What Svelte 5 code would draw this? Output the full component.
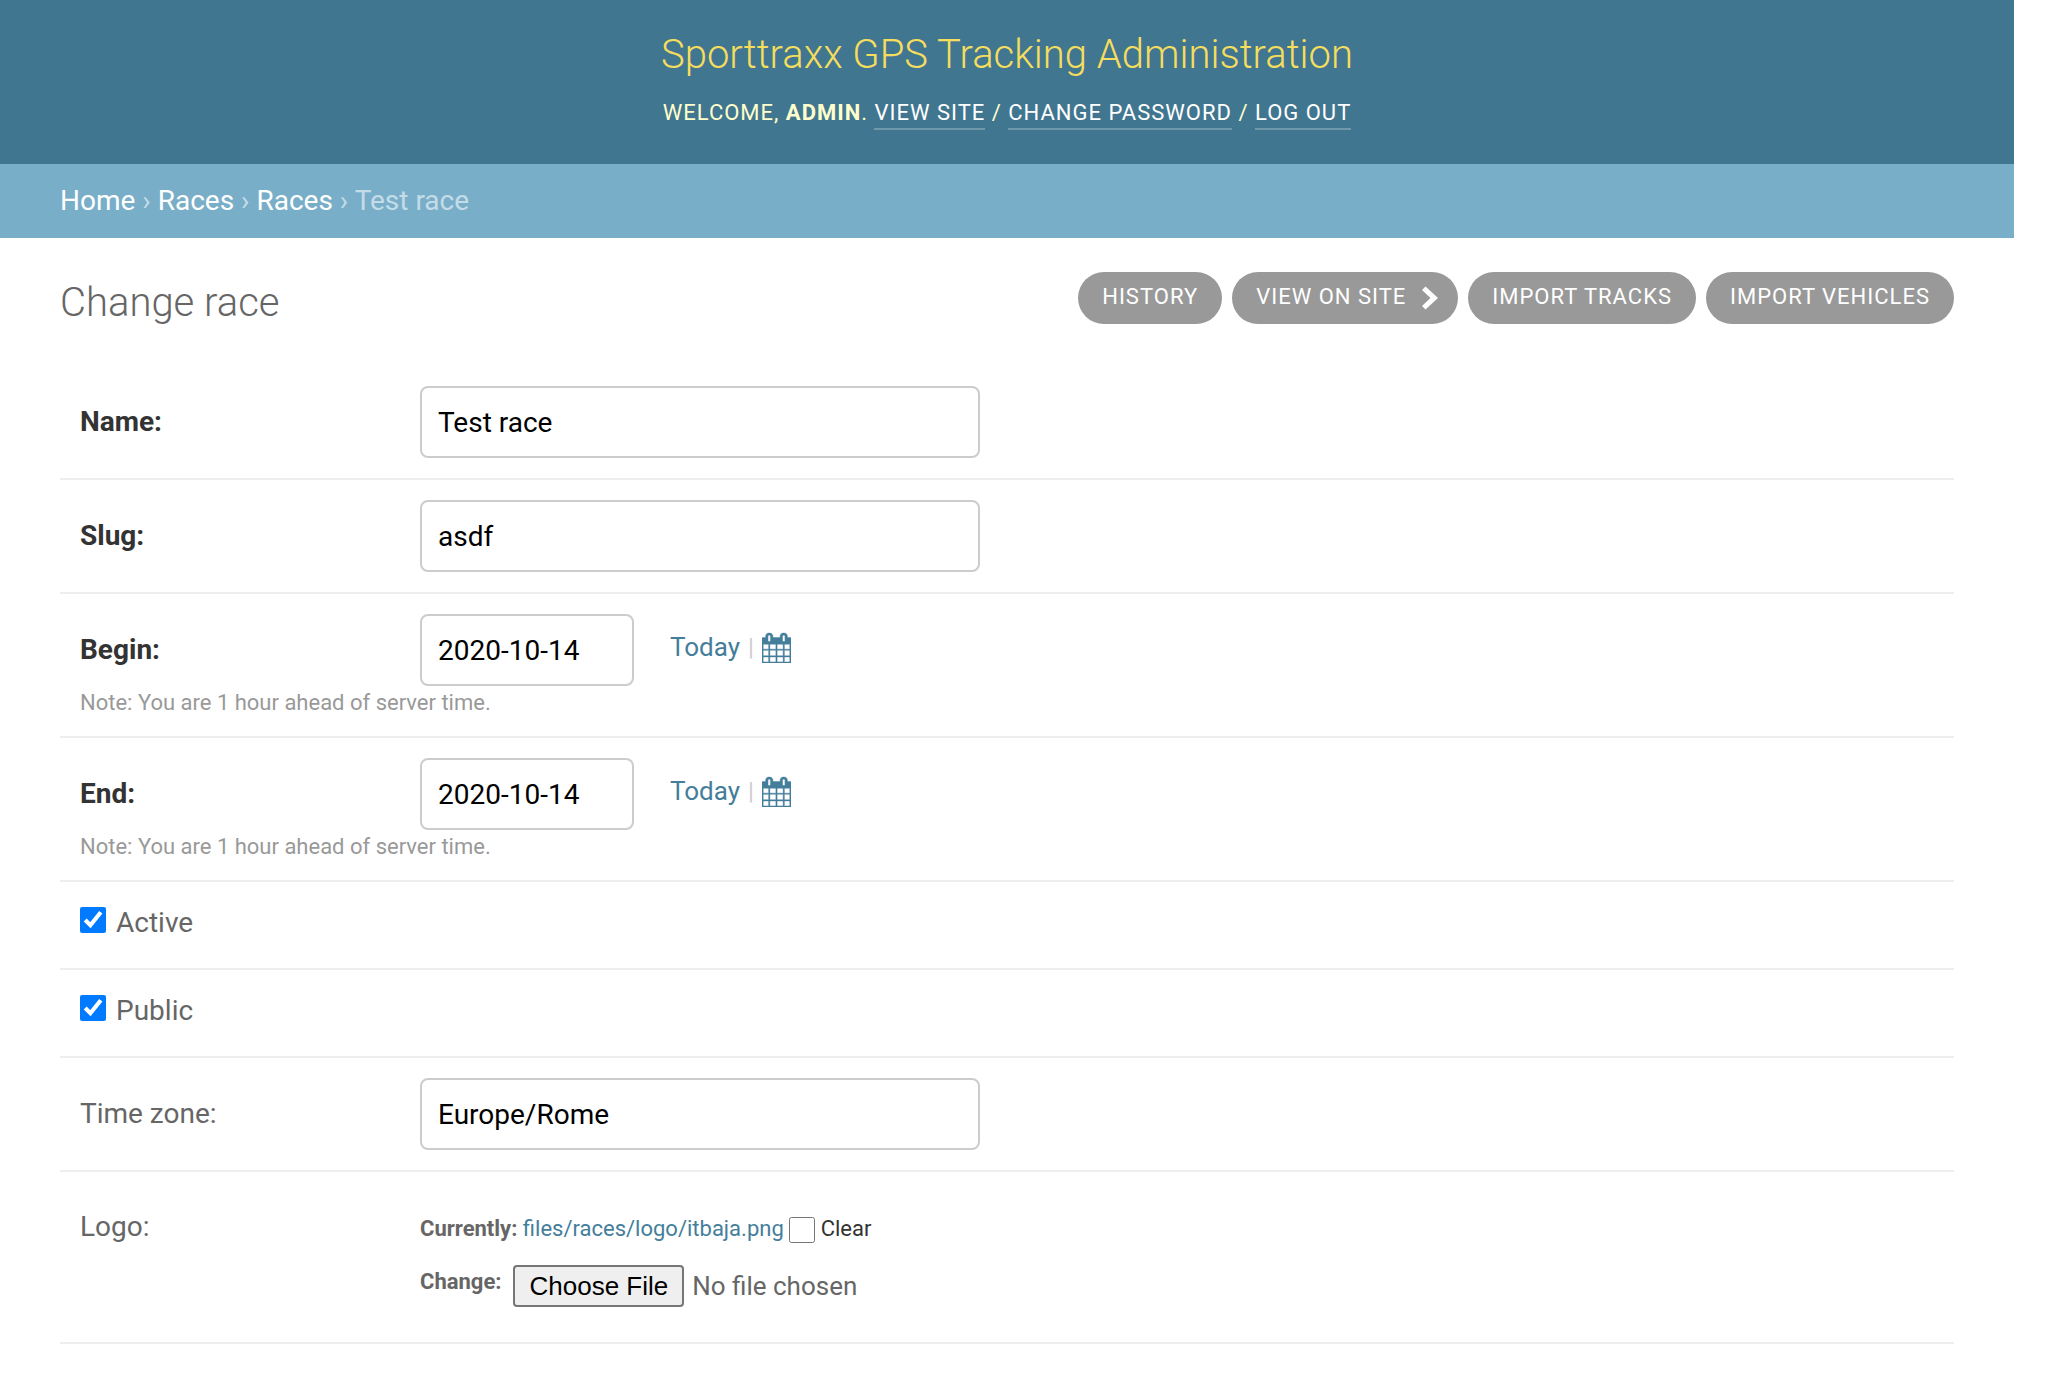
<script>
	const title = "Sporttraxx GPS Tracking Administration";
	const objectTools = ["History", "View on site", "Import tracks", "Import vehicles"];
</script>

{#snippet calendar()}
	<svg class="cal" viewBox="128 -64 1536 1792" width="29" height="31" preserveAspectRatio="none" aria-hidden="true">
		<path fill="#447e9b" stroke="#447e9b" stroke-width="24" d="M192 1664h288v-288h-288v288zm352 0h320v-288h-320v288zm-352-352h288v-320h-288v320zm352 0h320v-320h-320v320zm-352-384h288v-288h-288v288zm736 736h320v-288h-320v288zm-384-736h320v-288h-320v288zm768 736h288v-288h-288v288zm-384-352h320v-320h-320v320zm-352-864v-288q0-13-9.500-22.500t-22.500-9.500h-64q-13 0-22.500 9.500t-9.500 22.500v288q0 13 9.500 22.500t22.500 9.500h64q13 0 22.500-9.500t9.500-22.500zm736 864h288v-320h-288v320zm-384-384h320v-288h-320v288zm384 0h288v-288h-288v288zm32-480v-288q0-13-9.500-22.500t-22.500-9.500h-64q-13 0-22.500 9.500t-9.500 22.500v288q0 13 9.500 22.500t22.500 9.500h64q13 0 22.500-9.500t9.500-22.500zm384-64v1280q0 52-38 90t-90 38h-1408q-52 0-90-38t-38-90v-1280q0-52 38-90t90-38h128v-96q0-66 47-113t113-47h64q66 0 113 47t47 113v96h384v-96q0-66 47-113t113-47h64q66 0 113 47t47 113v96h128q52 0 90 38t38 90z" />
	</svg>
{/snippet}

{#snippet dateRow(label)}
	<div class="row">
		<div class="field">
			<label class="required" for={label}>{label}:</label>
			<input id={label} class="date" type="text" value="2020-10-14" />
			<span class="shortcuts"><a href="#today">Today</a><span class="sep">|</span>{@render calendar()}</span>
		</div>
		<p class="note">Note: You are 1 hour ahead of server time.</p>
	</div>
{/snippet}

<header>
	<h1>{title}</h1>
	<div class="user-tools">
		Welcome, <strong>admin</strong>.
		<a href="#site">View site</a> /
		<a href="#password">Change password</a> /
		<a href="#logout">Log out</a>
	</div>
</header>

<nav class="crumbs">
	<a href="#home">Home</a> › <a href="#races">Races</a> › <a href="#list">Races</a> › Test race
</nav>

<main>
	<div class="head">
		<h2>Change race</h2>
		<ul class="tools">
			{#each objectTools as tool, i}
				<li class:link={i === 1}>
					{tool}
					{#if i === 1}
						<svg viewBox="0 0 16 24" width="16" height="24" aria-hidden="true">
							<path fill="#fff" d="M3.500 0.500 16 12 3.500 23.500 0 20 8.500 12 0 4z" />
						</svg>
					{/if}
				</li>
			{/each}
		</ul>
	</div>

	<div class="row">
		<div class="field">
			<label class="required" for="name">Name:</label>
			<input id="name" class="wide" type="text" value="Test race" />
		</div>
	</div>
	<div class="row">
		<div class="field">
			<label class="required" for="slug">Slug:</label>
			<input id="slug" class="wide" type="text" value="asdf" />
		</div>
	</div>

	{@render dateRow("Begin")}
	{@render dateRow("End")}

	<div class="row check">
		<input id="active" type="checkbox" checked />
		<label for="active">Active</label>
	</div>
	<div class="row check">
		<input id="public" type="checkbox" checked />
		<label for="public">Public</label>
	</div>

	<div class="row">
		<div class="field">
			<label for="tz">Time zone:</label>
			<input id="tz" class="wide" type="text" value="Europe/Rome" />
		</div>
	</div>

	<div class="row logo">
		<div class="field top">
			<label for="logo">Logo:</label>
			<div class="upload">
				<p class="current">
					<b>Currently:</b> <a href="#logo">files/races/logo/itbaja.png</a>
					<input id="clear" type="checkbox" />
					<label for="clear">Clear</label>
				</p>
				<p class="change">
					<b>Change:</b>
					<input id="logo" type="file" />
				</p>
			</div>
		</div>
	</div>
</main>

<style>
	:global(body) {
		font-family: Roboto, "Liberation Sans", sans-serif;
		color: #333;
		background: #fff;
		padding-right: 34px;
	}

	header {
		background: #417690;
		height: 164px;
		box-sizing: border-box;
		padding-top: 31px;
		text-align: center;
		color: #ffc;
	}

	h1 {
		margin: 0;
		font-size: 40px;
		line-height: 48px;
		font-weight: 300;
		color: #f5dd5d;
	}

	.user-tools {
		margin-top: 18px;
		font-size: 22px;
		line-height: 32px;
		letter-spacing: 1px;
		text-transform: uppercase;
	}

	.user-tools strong {
		font-weight: 700;
	}

	.user-tools a {
		padding-bottom: 3px;
		color: #fff;
		text-decoration: none;
		border-bottom: 2px solid rgba(255, 255, 255, 0.25);
	}

	.crumbs {
		background: #79aec8;
		height: 74px;
		box-sizing: border-box;
		padding: 0 60px;
		font-size: 28px;
		line-height: 74px;
		color: #c4dce8;
	}

	.crumbs a {
		color: #fff;
		text-decoration: none;
	}

	main {
		padding: 34px 60px 0;
	}

	.head {
		display: flex;
		justify-content: space-between;
		height: 94px;
		align-items: flex-start;
	}

	h2 {
		margin: 0;
		padding-top: 7px;
		font-size: 40px;
		line-height: 48px;
		font-weight: 300;
		color: #666;
	}

	.tools {
		display: flex;
		gap: 10px;
		margin: 0;
		padding: 0;
		list-style: none;
	}

	.tools li {
		height: 52px;
		box-sizing: border-box;
		padding: 0 24px 2px;
		border-radius: 26px;
		background: #999;
		color: #fff;
		font-size: 22px;
		line-height: 50px;
		letter-spacing: 1px;
		text-transform: uppercase;
		display: flex;
		align-items: center;
		gap: 16px;
	}

	.tools li.link {
		padding-right: 20px;
	}

	.tools li svg {
		margin-top: 2px;
	}

	.row {
		padding: 20px;
		border-bottom: 2px solid #eee;
		font-size: 28px;
	}

	.field {
		display: flex;
		align-items: center;
	}

	.field.top {
		align-items: flex-start;
	}

	.field > label {
		width: 340px;
		flex: none;
		margin-bottom: 2px;
		font-size: 28px;
		color: #666;
	}

	.field > label.required {
		font-weight: 700;
		color: #333;
	}

	.field.top > label {
		margin-top: 18px;
	}

	input[type="text"] {
		height: 72px;
		box-sizing: border-box;
		padding: 0 16px;
		border: 2px solid #ccc;
		border-radius: 8px;
		font: 28px Roboto, sans-serif;
		color: #000;
	}

	.wide {
		width: 560px;
	}

	.date {
		width: 214px;
	}

	.shortcuts {
		display: flex;
		align-items: center;
		margin: 0 0 6px 36px;
		color: #447e9b;
		font-size: 26px;
	}

	.shortcuts a {
		color: #447e9b;
		text-decoration: none;
	}

	.sep {
		margin: 0 8px;
		color: #ccc;
		font-size: 24px;
	}

	.note {
		margin: 4px 0 0;
		font-size: 22px;
		line-height: 26px;
		color: #999;
	}

	.check {
		display: flex;
		align-items: center;
		height: 88px;
		box-sizing: border-box;
		padding: 0 20px 5px;
		color: #666;
	}

	.check input {
		width: 26px;
		height: 26px;
		margin: 0 10px 5px 0;
		accent-color: #007bff;
	}

	.logo {
		padding-bottom: 35px;
	}

	.upload {
		padding-top: 24px;
		font-size: 22px;
		color: #333;
	}

	.upload b {
		color: #666;
	}

	.upload a {
		color: #447e9b;
		text-decoration: none;
	}

	.upload p {
		margin: 0;
	}

	.current input {
		width: 26px;
		height: 26px;
		margin: 0;
		vertical-align: middle;
	}

	.change {
		display: flex;
		align-items: center;
		gap: 12px;
		margin-top: 22px !important;
	}

	.change b {
		margin-bottom: 10px;
	}

	.change input {
		font: 26px Roboto, sans-serif;
		color: #666;
	}

	.change input::file-selector-button {
		height: 42px;
		box-sizing: border-box;
		margin-right: 8px;
		padding: 0 14px;
		border: 2px solid #767676;
		border-radius: 4px;
		background: #efefef;
		color: #000;
		font: 26px "Liberation Sans", sans-serif;
	}
</style>
